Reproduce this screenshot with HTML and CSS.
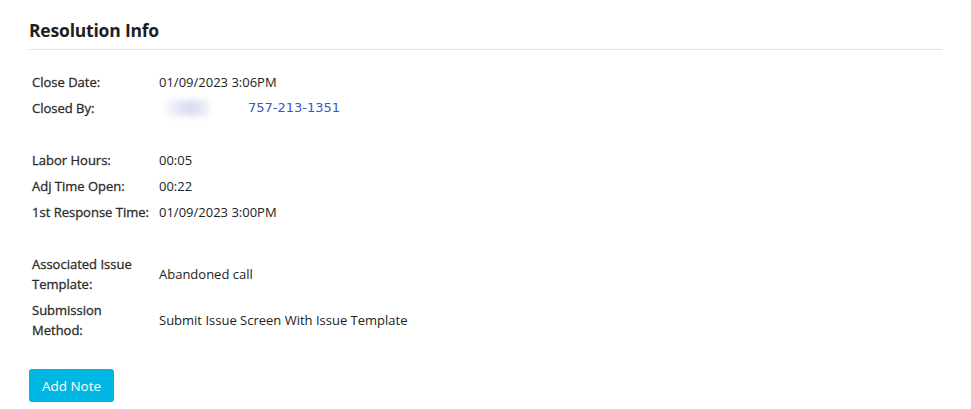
FILE: index.html
```html
<!DOCTYPE html>
<html lang="en">
<head>
<meta charset="utf-8">
<title>Resolution Info</title>
<link rel="stylesheet" href="styles.css">
</head>
<body>
<div class="panel">
  <h2 class="title">Resolution Info</h2>
  <div class="info">
    <div class="label">Close Date:</div><div class="value">01/09/2023 3:06PM</div>
    <div class="label">Closed By:</div><div class="value"><span class="blur"></span><a class="phone">757-213-1351</a></div>
    <div class="spacer"></div>
    <div class="label">Labor Hours:</div><div class="value">00:05</div>
    <div class="label">Adj Time Open:</div><div class="value">00:22</div>
    <div class="label">1st Response Time:</div><div class="value">01/09/2023 3:00PM</div>
    <div class="spacer"></div>
    <div class="label">Associated Issue Template:</div><div class="value">Abandoned call</div>
    <div class="label">Submission Method:</div><div class="value">Submit Issue Screen With Issue Template</div>
  </div>
  <button class="btn">Add Note</button>
</div>
</body>
</html>
```

FILE: styles.css
```css
html, body {
  margin: 0;
  padding: 0;
  background: #fff;
}
body {
  font-family: "Open Sans", "Noto Sans", sans-serif;
  color: #222;
}
.panel {
  padding: 18px 29px 0 29px;
}
.title {
  margin: 0;
  font-size: 17.5px;
  line-height: 24px;
  font-weight: 700;
  color: #1e1e1e;
  padding-bottom: 7px;
  border-bottom: 1px solid #e3e3e3;
  letter-spacing: -0.2px;
}
.info {
  display: grid;
  grid-template-columns: 127px 1fr;
  margin-top: 19px;
  padding-left: 3px;
  font-size: 13px;
}
.label, .value {
  padding: 3px 0;
  line-height: 20px;
  display: flex;
  align-items: center;
}
.label {
  color: #2b2b2b;
  -webkit-text-stroke: 0.3px #2b2b2b;
  padding-right: 6px;
}
.value {
  color: #222;
}
.spacer {
  grid-column: 1 / -1;
  height: 26px;
}
.blur {
  display: inline-block;
  width: 44px;
  height: 16px;
  margin-left: 6px;
  margin-right: 39px;
  background: linear-gradient(90deg, rgba(225,228,242,0.3), #d6daf0 60%, rgba(225,228,242,0.5));
  border-radius: 4px;
  filter: blur(3px);
}
.phone {
  font-family: "DejaVu Sans", sans-serif;
  font-size: 13px;
  color: #3a55c6;
}
.btn {
  margin-top: 26px;
  width: 85px;
  height: 33px;
  border: 0;
  border-radius: 3px;
  background: #00b6e2;
  color: #fff;
  font-family: "Open Sans", "Noto Sans", sans-serif;
  font-size: 13.5px;
  padding: 0;
}
```
